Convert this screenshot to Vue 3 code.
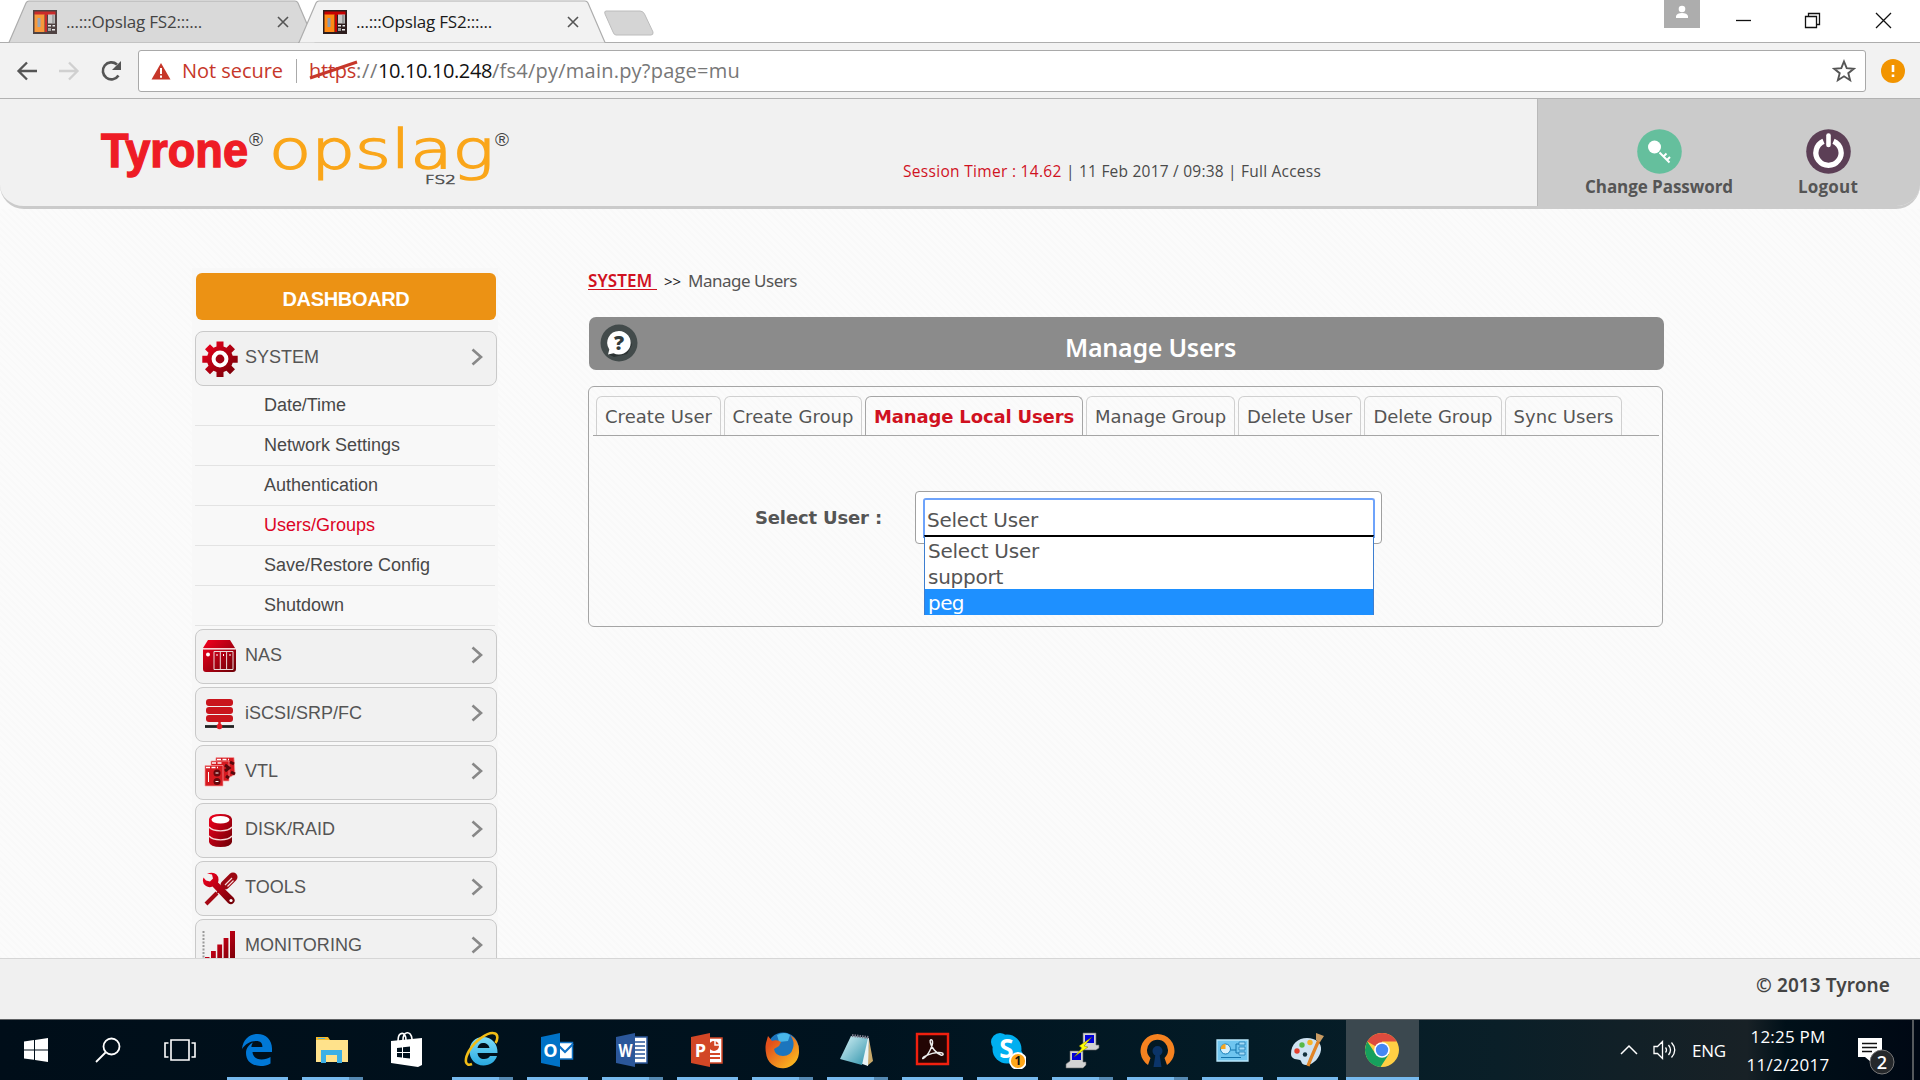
<script setup>
// Stretches a label's letter spacing so that it fills the given width.
const vFit = {
  mounted(el, { value }) {
    const natural = el.getBoundingClientRect().width
    el.style.letterSpacing = (value - natural) / el.textContent.length + 'px'
  },
}

const browserTabs = [
  { title: '...:::Opslag FS2:::...', active: false },
  { title: '...:::Opslag FS2:::...', active: true },
]

const submenu = [
  { label: 'Date/Time', w: 82 },
  { label: 'Network Settings', w: 136 },
  { label: 'Authentication', w: 114 },
  { label: 'Users/Groups', w: 111, active: true },
  { label: 'Save/Restore Config', w: 166 },
  { label: 'Shutdown', w: 80 },
]

const menu = [
  { id: 'system', label: 'SYSTEM', w: 74 },
  { id: 'nas', label: 'NAS', w: 37 },
  { id: 'iscsi', label: 'iSCSI/SRP/FC', w: 117 },
  { id: 'vtl', label: 'VTL', w: 33 },
  { id: 'disk', label: 'DISK/RAID', w: 90 },
  { id: 'tools', label: 'TOOLS', w: 61 },
  { id: 'monitoring', label: 'MONITORING', w: 117 },
]

const tabs = [
  { label: 'Create User', box: 125, w: 107 },
  { label: 'Create Group', box: 138, w: 121 },
  { label: 'Manage Local Users', box: 218, w: 200 },
  { label: 'Manage Group', box: 149, w: 131 },
  { label: 'Delete User', box: 123, w: 105 },
  { label: 'Delete Group', box: 138, w: 119 },
  { label: 'Sync Users', box: 117, w: 100 },
]
tabs[2].active = true

const options = [
  { label: 'Select User', w: 111 },
  { label: 'support', w: 75 },
  { label: 'peg', w: 36, active: true },
]

const apps = [
  { id: 'edge', run: true },
  { id: 'explorer', run: true, multi: true },
  { id: 'store' },
  { id: 'ie', run: true, multi: true },
  { id: 'outlook', run: true },
  { id: 'word', run: true, multi: true },
  { id: 'powerpoint', run: true },
  { id: 'firefox', run: true, multi: true },
  { id: 'notepad', run: true, multi: true },
  { id: 'acrobat', run: true },
  { id: 'skype', run: true },
  { id: 'putty', run: true, multi: true },
  { id: 'openvpn', run: true, multi: true },
  { id: 'panel', run: true },
  { id: 'paint', run: true },
  { id: 'chrome', run: true, active: true },
]
</script>

<template>
  <div class="screen">
    <!-- Shared gradients -->
    <svg class="defs" width="0" height="0">
      <defs>
        <linearGradient id="red" x1="0" y1="0" x2="1" y2="1">
          <stop offset="0.1" stop-color="#e8001c" /><stop offset="1" stop-color="#6b0006" />
        </linearGradient>
        <linearGradient id="sky" x1="0" y1="0" x2="1" y2="1">
          <stop offset="0" stop-color="#d9f4f8" /><stop offset="1" stop-color="#2f93ab" />
        </linearGradient>
        <linearGradient id="ie" x1="0" y1="0" x2="0" y2="1">
          <stop offset="0" stop-color="#7ddcf9" /><stop offset="1" stop-color="#29a9e0" />
        </linearGradient>
        <linearGradient id="fox" x1="0" y1="0" x2="1" y2="1">
          <stop offset="0.2" stop-color="#e2501c" /><stop offset="1" stop-color="#ffcb20" />
        </linearGradient>
      </defs>
    </svg>

    <div class="tabstrip">
      <div v-for="(t, i) in browserTabs" :key="i" class="btab" :class="{ active: t.active }">
        <svg class="btab-shape" width="308" height="43" viewBox="0 0 308 43">
          <path d="M0 42.5 H1 L18 3 Q19 1 21 1 H287 Q289 1 290 3 L307 42.5" />
        </svg>
        <svg class="favicon" width="24" height="24" viewBox="0 0 24 24">
          <path fill="#2d1d1d" d="M0 0h24v24H0z" />
          <path fill="#c60000" d="M1.500 1.500h21V5h-21zM12 1.500h2V22h-2z" />
          <path fill="#ff8a14" d="M1.500 4.500h10V22h-10z" />
          <path fill="#8b9aae" d="M4.500 8h3v9h-3z" />
          <path fill="#c9c9c9" d="M15 4.500h7v9h-7z" />
          <path fill="#999" d="M19 5h2.500v8H19zM15 18h3v3h-3z" />
          <path fill="#eee" d="M15 15h3v1.500h-3zM19.500 15H22v1.500h-2.500zM19 19h3v1.500h-3z" />
        </svg>
        <span v-fit="136" class="btab-title">{{ t.title }}</span>
        <svg class="btab-close" width="12" height="12" viewBox="0 0 12 12"><path d="M1 1l10 10M11 1L1 11" fill="none" stroke="#555" stroke-width="1.600" /></svg>
      </div>
      <svg class="newtab" width="54" height="26" viewBox="0 0 54 26">
        <path d="M3 1H37Q40 1 41.500 4L50 22Q50.500 25 48 25H13Q11 25 10 22L2 4Q1 1 3 1Z" fill="#d5d5d5" stroke="#bcbcbc" />
      </svg>
      <div class="window-controls">
        <svg class="profile" width="36" height="28" viewBox="0 0 36 28"><circle cx="18" cy="9" r="3.300" fill="#fff" /><path d="M12 18v-2q1-3 6-3t6 3v2z" fill="#fff" /></svg>
        <svg class="wc" width="17" height="17" viewBox="0 0 17 17"><path d="M1 8.500h15" /></svg>
        <svg class="wc" width="17" height="17" viewBox="0 0 17 17"><path d="M1.500 4.500h11v11h-11zM4.500 4V1.500h11v11H13" /></svg>
        <svg class="wc close" width="17" height="17" viewBox="0 0 17 17"><path d="M1 1l15 15M16 1L1 16" /></svg>
      </div>
    </div>

    <div class="toolbar">
      <svg class="nav-icons" width="110" height="24" viewBox="0 0 110 24" fill="none" stroke-width="2.300">
        <path d="M21 12H3M11 3.500L2.500 12L11 20.500" stroke="#555" />
        <path d="M43 12h18M53 3.500L61.500 12L53 20.500" stroke="#d0d0d0" />
        <g transform="translate(1 0)"><path d="M101.500 16.500A8.500 8.500 0 1 1 100 5.500" stroke="#555" stroke-width="2.600" />
        <path d="M104 2v9h-9z" fill="#555" /></g>
      </svg>
      <div class="omnibox">
        <svg width="20" height="18" viewBox="0 0 20 18"><path d="M10 1L19.500 17.500H.5Z" fill="#c6372a" /><path d="M10 6v6M10 13.500v2.200" stroke="#fff" stroke-width="2" /></svg>
        <span v-fit="101" class="not-secure">Not secure</span>
        <i class="sep"></i>
        <span class="url"><span v-fit="47" class="scheme">https<svg class="strike" width="50" height="22" viewBox="0 0 50 22"><path d="M1 19L48 3" stroke="#c6372a" stroke-width="3" /></svg></span><span v-fit="22">://</span><span v-fit="114" class="host">10.10.10.248</span><span v-fit="248">/fs4/py/main.py?page=mu</span></span>
        <svg class="star" width="24" height="24" viewBox="0 0 24 24"><path d="M12 2.500l2.700 6.700 7.100.5-5.500 4.500 1.800 7L12 17.300 5.900 21.200l1.800-7L2.200 9.700l7.100-.5z" fill="none" stroke="#555" stroke-width="1.900" /></svg>
      </div>
      <svg class="alert" width="24" height="24" viewBox="0 0 24 24"><circle cx="12" cy="12" r="12" fill="#f29400" /><path d="M12 6v7M12 15.500v2.500" stroke="#fff" stroke-width="2.600" /></svg>
    </div>

    <header class="header">
      <svg class="logo" width="420" height="76" viewBox="0 0 420 76">
        <text x="1" y="47.500" font-size="49" font-weight="700" fill="#ee1c25" stroke="#ee1c25" stroke-width="1.400" textLength="147" lengthAdjust="spacingAndGlyphs">Tyrone</text>
        <text x="149" y="27" font-size="19" fill="#444" textLength="14" lengthAdjust="spacingAndGlyphs">®</text>
        <text class="thin" x="169" y="49" font-size="53" fill="#faa61a" stroke="#faa61a" stroke-width="1.500" textLength="225" lengthAdjust="spacingAndGlyphs">opslag</text>
        <text class="thin" x="325" y="64.500" font-size="13" fill="#555" stroke="#555" stroke-width=".7" textLength="31" lengthAdjust="spacingAndGlyphs">FS2</text>
        <text x="395" y="27" font-size="19" fill="#444" textLength="14" lengthAdjust="spacingAndGlyphs">®</text>
      </svg>
      <div class="session"><span v-fit="163" class="red">Session Timer : 14.62 </span><span v-fit="255">| 11 Feb 2017 / 09:38 | Full Access</span></div>
      <div class="account">
        <div class="action pass">
          <svg width="45" height="45" viewBox="0 0 45 45"><circle cx="22.500" cy="22.500" r="22.300" fill="#65bf9d" /><circle cx="17.500" cy="18" r="6.500" fill="#fff" /><path d="M22.500 23.500L32.500 33.500M26.500 27.500l3-3M30 31l3-3" stroke="#fff" stroke-width="2" fill="none" /></svg>
          <span v-fit="148">Change Password</span>
        </div>
        <div class="action">
          <svg width="45" height="45" viewBox="0 0 45 45"><circle cx="22.500" cy="22.500" r="22.300" fill="#5c3f56" /><path d="M17.500 12.200A12.600 12.600 0 1 0 27.500 12.200" stroke="#fff" stroke-width="5.300" fill="none" /><path d="M22.500 6.500v9.500" stroke="#fff" stroke-width="4.600" stroke-linecap="round" /></svg>
          <span v-fit="60">Logout</span>
        </div>
      </div>
    </header>

    <main class="main">
      <nav class="sidebar">
        <div class="dashboard"><span v-fit="127">DASHBOARD</span></div>
        <template v-for="m in menu" :key="m.id">
          <div class="item">
            <svg class="item-icon" width="36" height="36" viewBox="0 0 36 36">
              <g v-if="m.id === 'system'">
                <path fill="url(#red)" d="M14.500.5h7v5l3 1.200 3.500-3.500 5 5-3.500 3.500 1.200 3h5v7h-5l-1.200 3 3.500 3.500-5 5-3.500-3.500-3 1.200v5h-7v-5l-3-1.200L8 33.200l-5-5 3.500-3.500-1.200-3h-5v-7h5l1.200-3L3 8.200l5-5 3.500 3.500 3-1.200z" />
                <circle cx="18" cy="18" r="6.400" fill="#a00012" stroke="#fff" stroke-width="4" />
              </g>
              <g v-else-if="m.id === 'nas'">
                <path fill="url(#red)" d="M6 1h22l5 8H1zM1 10.500h33V30q0 3-3 3H4q-3 0-3-3z" />
                <path d="M1.500 9.700h32" stroke="#f8cccc" />
                <circle cx="6" cy="15.500" r="2" fill="#fff" />
                <path d="M12 12.500h19v18H12zM18.300 12.500v18M24.600 12.500v18" fill="none" stroke="#eadada" />
                <path d="M15 15v2M21.500 15v2M28 15v2" stroke="#fff" />
              </g>
              <g v-else-if="m.id === 'iscsi'">
                <rect x="4" y="2" width="27" height="7" rx="3" fill="#c9141c" />
                <rect x="4" y="10" width="27" height="7" rx="3" fill="#c9141c" />
                <rect x="4" y="18" width="27" height="7" rx="3" fill="#c9141c" />
                <path d="M17.500 25v6" stroke="#e01a22" stroke-width="2.500" /><path d="M3 29.500h29" stroke="#222" stroke-width="2.800" /><circle cx="17.500" cy="29.500" r="2.800" fill="#e01a22" />
              </g>
              <g v-else-if="m.id === 'vtl'">
                <g fill="#d61a20" stroke="#f5a0a0" stroke-width=".7"><path d="M14 2.500h18l1 17-8 4H13z" /><path d="M9 6h18v20H9z" /><path d="M3 10.500h18V31H3z" /></g>
                <path d="M23 10l4 3-4 3M28 7l4 2M24 21l3 2M29 17l4 2" stroke="#56080c" stroke-width="3" fill="none" />
                <path d="M4 12.500h12M10 8h10M15 4.500h12" stroke="#fff" stroke-width="1.300" stroke-dasharray="4 1.500" />
                <circle cx="15" cy="18" r="3.500" fill="#67080d" /><circle cx="15" cy="26.500" r="3.500" fill="#67080d" /><path d="M6.500 17v10M13.500 18h3M13.500 26.500h3" stroke="#fff" />
              </g>
              <g v-else-if="m.id === 'disk'">
                <path fill="url(#red)" d="M7 6v23q1 5 11.500 5T30 29V6Q29 1 18.500 1T7 6z" />
                <ellipse cx="18.500" cy="6.800" rx="9" ry="3.800" fill="#fff" />
                <path d="M7 14q3 3.800 11.500 3.800T30 14M7 23q3 3.800 11.500 3.800T30 23" fill="none" stroke="#f7dada" stroke-width="1.300" />
              </g>
              <g v-else-if="m.id === 'tools'">
                <path d="M4 33l11-11" stroke="#a50814" stroke-width="4" /><path d="M15 22l7-7" stroke="#a50814" stroke-width="2" />
                <path d="M23 14l8-8" stroke="#9c0712" stroke-width="9" stroke-linecap="round" />
                <path d="M23 14l7-7M25.500 15.500l6-6" stroke="#f5dada" stroke-width="1.200" />
                <path fill="url(#red)" d="M5 2.500l5 1 1 4-3 3-4-1-2.500-3Q-.5 12 4 15q3 2 6.500.5L26 32q3 2.500 5.500 0t0-5.500L16 11.500q1.500-5-1.500-8T5 2.500z" />
                <circle cx="29" cy="29.500" r="1.600" fill="#fff" />
              </g>
              <g v-else>
                <path d="M1.500 2v34" stroke="#999" stroke-width="2" stroke-dasharray="2 1.500" />
                <path fill="url(#red)" d="M3 28h4.500v10H3zM9 22h4.800v16H9zM15.300 15.500h4.800V38h-4.800zM21.600 9h4.800v29h-4.800zM28 2h5v36h-5z" />
              </g>
            </svg>
            <span v-fit="m.w" class="item-label">{{ m.label }}</span>
            <svg class="chev" width="12" height="18" viewBox="0 0 12 18"><path d="M1.500 1.500L10 9L1.500 16.500" fill="none" stroke="#888" stroke-width="2.600" /></svg>
          </div>
          <ul v-if="m.id === 'system'" class="submenu">
            <li v-for="s in submenu" :key="s.label" :class="{ active: s.active }"><span v-fit="s.w">{{ s.label }}</span></li>
          </ul>
        </template>
      </nav>

      <section class="content">
        <div class="crumbs"><a v-fit="69">SYSTEM&nbsp;</a><span v-fit="17" class="arrows">&gt;&gt;</span><span v-fit="109">Manage Users</span></div>
        <div class="titlebar">
          <svg class="help" width="38" height="38" viewBox="0 0 38 38"><circle cx="19" cy="19" r="18.500" fill="#434b4b" /><path d="M8 30l6 3 13-3 5-9-3-9z" fill="#2c3333" /><path d="M19 7a11.800 11.800 0 1 1-5.500 22.300L8 30.500l1.300-5A11.800 11.800 0 0 1 19 7z" fill="#fff" /><text x="19" y="26" text-anchor="middle" font-size="20" font-weight="800" fill="#333c3c">?</text></svg>
          <h1><span v-fit="171">Manage Users</span></h1>
        </div>
        <div class="panel">
          <div class="tabs">
            <div v-for="t in tabs" :key="t.label" class="tab" :class="{ active: t.active }" :style="{ width: t.box + 'px' }"><span v-fit="t.w">{{ t.label }}</span></div>
          </div>
          <div class="form-row">
            <label><span v-fit="127">Select User :</span></label>
            <div class="select">
              <div class="select-inner"><span v-fit="111">Select User</span></div>
              <ul class="dropdown">
                <li v-for="o in options" :key="o.label" :class="{ active: o.active }"><span v-fit="o.w">{{ o.label }}</span></li>
              </ul>
            </div>
          </div>
        </div>
      </section>
    </main>

    <footer class="footer"><span v-fit="134">© 2013 Tyrone</span></footer>

    <div class="taskbar">
      <div class="starts">
        <svg width="24" height="24" viewBox="0 0 24 24"><path fill="#fff" d="M0 3.500l10-1.400v9.300H0zM11 2l13-2v11.400H11zM0 12.500h10v9.300L0 20.500zM11 12.500h13V24l-13-2z" /></svg>
        <svg width="26" height="26" viewBox="0 0 26 26" fill="none" stroke="#fff" stroke-width="1.800"><circle cx="16.500" cy="9.500" r="8" /><path d="M10.500 15.500L1 25" /></svg>
        <svg width="32" height="24" viewBox="0 0 32 24" fill="none" stroke="#fff" stroke-width="1.600"><path d="M7 2h18v20H7zM4.500 5H1v14h3.500M27.500 5H31v14h-3.500" /></svg>
      </div>
      <div class="apps">
        <div v-for="a in apps" :key="a.id" class="app" :class="{ run: a.run, multi: a.multi, active: a.active }">
          <svg width="38" height="38" viewBox="0 0 38 38">
            <g v-if="a.id === 'edge'">
              <path fill="#0078d7" d="M4 18C5 8 12 3 19.500 3 28 3 34 9 34 17.500V21H14.500c.3 5 4.500 7.500 9 7.500 3.500 0 6.500-1 9-2.500v6.500C29.500 34.500 26 35 22.500 35 14 35 8 30 8 22c0-5 3-8.500 7-10.500-1 1.200-1.500 3-1.600 4.500h11c0-4-2-6-6-6-6 0-11 3-14.400 8z" />
            </g>
            <g v-else-if="a.id === 'explorer'">
              <path fill="#f4b92c" d="M3 6h12l2 3h18v4H3z" /><path fill="#ffe28b" d="M3 9h32v22H3z" /><path fill="#3cb0e6" d="M8 19h21v13h-5v-8H13v8H8z" /><path d="M5 7.500h7" stroke="#55b4dd" />
            </g>
            <g v-else-if="a.id === 'store'">
              <path fill="#fff" d="M3 10l31-3v27l-4 2L3 32z" /><path d="M10 10C10 0 18 0 18 9M15 9C15 0 23-1 24 8" fill="none" stroke="#fff" stroke-width="1.600" /><path fill="#00101c" d="M9 17l5-.6V21H9zM15 16.200l7-.8V21h-7zM9 22h5v4.500L9 26zM15 22h7v5.500l-7-.8z" />
            </g>
            <g v-else-if="a.id === 'ie'">
              <path fill="url(#ie)" d="M20 6C29 6 35 13 34.500 22H14.500c.5 4 3 6 6.500 6 3 0 5-1 6-3h7c-2 6-7 9.500-13.500 9.500C12 34.500 6.500 28 6.500 20S12 6 20 6zm0 6c-3 0-5 2-5.500 5h12c-.5-3-3-5-6.500-5z" />
              <path d="M9 33C2 36 1 29 6 20 12 10 25 0 32 2.500 35.500 4 34.500 9 32.500 12" fill="none" stroke="#f2bd16" stroke-width="2.600" />
            </g>
            <g v-else-if="a.id === 'outlook'">
              <path fill="#fff" d="M20 11h15v17H20z" /><path d="M20 11.500h14.500v16.500H20" fill="none" stroke="#1273c4" stroke-width="1.500" /><path d="M20 14l7 7 8-8" fill="none" stroke="#0f72c6" stroke-width="2.200" /><path fill="#0072c6" d="M3 6l19-4v34L3 32z" /><text x="12.500" y="25.500" class="ico-letter">O</text>
            </g>
            <g v-else-if="a.id === 'word'">
              <path fill="#fff" stroke="#2b579a" stroke-width="1.500" d="M20 6h14v26H20z" /><path d="M22 11h10M22 15h10M22 19h10M22 23h10M22 27h10" stroke="#2b579a" stroke-width="1.700" /><path fill="#2b579a" d="M3 6l19-4v34L3 32z" /><text x="12.500" y="25.500" class="ico-letter" textLength="14" lengthAdjust="spacingAndGlyphs">W</text>
            </g>
            <g v-else-if="a.id === 'powerpoint'">
              <path fill="#fff" stroke="#d24726" stroke-width="1.500" d="M20 7h14v25H20z" /><circle cx="26" cy="15" r="5" fill="#d24726" /><path d="M27 9v5h5" stroke="#fff" stroke-width="1.500" fill="none" /><path d="M22 23h10M22 27h10" stroke="#d24726" stroke-width="1.800" /><path fill="#d24726" d="M3 6l19-4v34L3 32z" /><text x="12.500" y="25.500" class="ico-letter">P</text>
            </g>
            <g v-else-if="a.id === 'firefox'">
              <circle cx="20" cy="17" r="15.500" fill="#1c75bd" /><path fill="#49b6e8" d="M14 4q8-4 13 0l-2 6-9 1z" />
              <path fill="url(#fox)" d="M3 12L5 5l4 5q5-2 9 1l-2 4-5 3q1 7 9 7 8 0 10-8 2-7-3-13 9 5 9 15.500A16.300 16.300 0 0 1 3 22q-1-5 0-10z" />
            </g>
            <g v-else-if="a.id === 'notepad'">
              <path fill="#c8a96b" d="M31 8l4 22-6 5z" /><path fill="#e9f4f5" d="M14 5l17 2-1 28-14-5z" /><path fill="url(#sky)" d="M13 5l17 2-6 27L2 28z" /><path d="M14 4.500l17 2" stroke="#778" stroke-width="3" stroke-dasharray="1.500 1" />
            </g>
            <g v-else-if="a.id === 'acrobat'">
              <path fill="#230504" stroke="#f0200f" stroke-width="2.400" d="M4 3h31v30H4z" /><path d="M10 27.500c5-2 10-13 9.500-17-.5-3-3-2-2.200 1 1 5 6 11 10.500 12.500 3 .8 3-1.800.5-2.300-5-1-13 1.500-17 4-1.500 1-2 2.300-1.300 1.800z" fill="none" stroke="#eee" stroke-width="1.500" />
            </g>
            <g v-else-if="a.id === 'skype'">
              <circle cx="12" cy="11" r="9" fill="#00aff0" /><circle cx="26" cy="25" r="9" fill="#00aff0" /><circle cx="19" cy="18" r="14.500" fill="#00aff0" /><text x="18.500" y="27" class="ico-letter big">S</text>
              <circle cx="30" cy="30" r="8" fill="#ffa719" stroke="#fff" stroke-width="1.800" /><text x="30" y="34" class="badge-one">1</text>
            </g>
            <g v-else-if="a.id === 'putty'">
              <path fill="#d3d3d3" stroke="#666" stroke-width=".6" d="M20 2h13v12h3v3l-3 2H18v-4h2zM7 20h13v11h3v3l-3 3H3v-4l4-3z" /><path fill="#0000d8" d="M22 4h9v8h-9zM9 22h9v7H9z" /><path fill="#ff0" stroke="#550" stroke-width=".4" d="M29 6l-13 9 3 2-8 9 14-10-4-1z" />
            </g>
            <g v-else-if="a.id === 'openvpn'">
              <path fill="#f58220" d="M10 34A17 17 0 1 1 29 34L26.500 27A10.500 10.500 0 1 0 12.500 27z" /><circle cx="19.500" cy="20" r="5" fill="#0b3468" /><path fill="#0b3468" d="M17.500 23h4l2 13h-8z" />
            </g>
            <g v-else-if="a.id === 'panel'">
              <path fill="#6fc5ef" stroke="#b9e7fb" stroke-width="1.300" d="M4 9h31v21H4z" /><circle cx="12.500" cy="18" r="5" fill="#d4effd" stroke="#167eb8" /><path fill="#f5a623" d="M12.500 18v-5a5 5 0 0 0-5 5z" /><path d="M18 19h5v-6h3M23 19v3h3M8 26.500h20" stroke="#1574ac" fill="none" /><path fill="#a5dcf8" stroke="#1674b0" stroke-width=".7" d="M26 11h6v3h-6zM26 16h6v3h-6zM26 21h6v3h-6z" />
            </g>
            <g v-else-if="a.id === 'paint'">
              <path fill="#cfe3f2" d="M19 7c9 0 15 5 14 12s-7 15-15 15c-5 0-4-4-6-5s-9 0-9-6C3 13 10 7 19 7z" /><circle cx="9" cy="20" r="2.700" fill="#e4402f" /><circle cx="14" cy="14" r="2.700" fill="#58b947" /><circle cx="22" cy="11.500" r="2.700" fill="#f7b329" /><circle cx="17" cy="23.500" r="2.200" fill="#14323e" /><path d="M20 35Q22 29 31 9" stroke="#e08426" stroke-width="3.200" fill="none" /><path d="M28 2l8 3-4 6-4-2z" fill="#c99b62" />
            </g>
            <g v-else>
              <circle cx="19" cy="19" r="17" fill="#ffcf44" /><path fill="#dd4b3e" d="M19 19L4.300 10.500A17 17 0 0 1 33.700 10.500H19z" /><path fill="#16a05d" d="M4.300 10.500A17 17 0 0 0 17.500 36L26 23l-14-1z" /><circle cx="19" cy="19" r="7.800" fill="#fff" /><circle cx="19" cy="19" r="6.200" fill="#4587f3" />
            </g>
          </svg>
        </div>
      </div>
      <div class="tray">
        <svg width="18" height="11" viewBox="0 0 18 11"><path d="M1 10L9 2l8 8" fill="none" stroke="#fff" stroke-width="1.500" /></svg>
        <svg class="speaker" width="24" height="20" viewBox="0 0 24 20" fill="none" stroke="#fff" stroke-width="1.300"><path d="M1 6.500h3.500L9.500 1.500v17L4.500 13.500H1zM12.500 7.500q2 2.500 0 5M15.500 5q4 5 0 10M18.500 2.500q6.500 7.500 0 15" /></svg>
        <span v-fit="34" class="lang">ENG</span>
        <div class="clock"><span v-fit="75">12:25 PM</span><span v-fit="83">11/2/2017</span></div>
        <svg class="notify" width="38" height="38" viewBox="0 0 38 38"><path fill="#fff" d="M1 1h24v19H14v5l-6-5H1z" /><path d="M5 6.500h15M5 10.500h15M5 14.500h10" stroke="#111" stroke-width="1.300" /><circle cx="25" cy="25" r="12" fill="#25282b" stroke="#777" /><text x="25" y="31.500" text-anchor="middle" font-size="18" font-weight="600" fill="#fff">2</text></svg>
        <i class="peek"></i>
      </div>
    </div>
  </div>
</template>

<style>
body { margin: 0; overflow: hidden; }
</style>

<style scoped>
.screen { width: 1920px; height: 1080px; display: flex; flex-direction: column; overflow: hidden; background: #fbfbfb; font-family: "Open Sans", "Noto Sans", sans-serif; color: #555; }
.screen * { box-sizing: border-box; }
.screen svg { flex: none; display: block; }
.screen span { display: inline-block; white-space: pre; flex: none; }
.defs { position: absolute; }
ul { list-style: none; margin: 0; padding: 0; }

.tabstrip { height: 43px; flex: none; display: flex; background: #fff; border-bottom: 1px solid #adadad; padding-left: 8px; }
.btab { position: relative; width: 308px; height: 43px; flex: none; display: flex; margin-right: -18px; padding-left: 25px; }
.btab + .btab { margin-right: -12px; padding-left: 25px; }
.btab-shape { position: absolute; left: 0; top: 0; fill: #d9d9d9; stroke: #adadad; stroke-width: 1.2; }
.btab.active .btab-shape { fill: #f2f2f2; }
.favicon { position: relative; margin-top: 10px; }
.btab:not(.active) .favicon { opacity: .8; }
.btab-title { position: relative; margin-left: 9px; font-size: 17px; line-height: 44px; color: #444; }
.btab.active .btab-title { color: #1a1a1a; }
.btab-close { position: relative; margin: 16px 0 0 75px; }
.newtab { margin: 10px 0 0 9px; }
.window-controls { margin-left: auto; display: flex; padding-right: 28px; }
.profile { background: #adadad; margin-right: 34px; }
.wc { margin: 12px 0 0 52px; fill: none; stroke: #111; stroke-width: 1.3; }
.wc.close { margin-left: 54px; }
.profile + .wc { margin-left: 1px; }

.toolbar { height: 56px; flex: none; display: flex; align-items: center; background: #f2f2f2; border-bottom: 1px solid #b2b2b2; padding: 0 15px 0 16px; }
.nav-icons { margin-right: 12px; }
.omnibox { width: 1728px; height: 42px; flex: none; display: flex; align-items: center; background: #fff; border: 1px solid #a9a9a9; border-radius: 3px; font-size: 20px; line-height: 40px; padding-left: 12px; color: #777; }
.not-secure { margin-left: 11px; color: #c6372a; }
.sep { width: 1px; height: 24px; background: #aaa; margin: 0 12px 0 13px; }
.url { display: flex !important; }
.scheme { position: relative; color: #c6372a; }
.strike { position: absolute; left: 0; top: 8px; }
.host { color: #111; }
.star { margin-left: auto; margin-right: 9px; }
.alert { margin-left: 15px; }

.header { height: 110px; flex: none; display: flex; background: #f1f1f1; border-bottom: 3px solid #cbcbcb; border-radius: 0 0 24px 24px; overflow: hidden; }
.logo { margin: 20px 0 0 100px; font-family: "Liberation Sans", sans-serif; }
.thin { font-family: "DejaVu Sans Light", "DejaVu Sans", sans-serif; font-weight: 200; }
.session { margin: 60px 0 0 383px; height: 24px; display: flex; font-size: 15.5px; line-height: 24px; color: #4a4a4a; }
.session .red { color: #d0111f; }
.account { margin-left: auto; width: 383px; height: 110px; background: #cbcbcb; border-left: 1px solid #b9b9b9; display: flex; padding: 30px 0 0 47px; }
.action { display: flex; flex-direction: column; align-items: center; font-size: 17px; font-weight: 700; line-height: 26px; color: #555; }
.action.pass { margin-right: 65px; }

.main { height: 749px; flex: none; overflow: hidden; display: flex; align-items: flex-start; background: repeating-linear-gradient(45deg, rgba(0,0,0,.008) 0 2px, transparent 2px 5px), #fbfbfb; }
.sidebar { margin: 59px 0 0 192px; width: 306px; flex: none; background: #f8f8f8; padding: 5px 1px 0 3px; font-family: "Liberation Sans", Arial, sans-serif; font-size: 18px; }
.dashboard { height: 47px; margin: 0 1px 11px; border-radius: 6px; background: #ec9214; color: #fff; font-size: 20px; font-weight: 700; line-height: 52px; text-align: center; }
.item { height: 55px; margin-bottom: 3px; display: flex; border: 1px solid #c9c9c9; border-radius: 8px; background: #f1f1f1; padding-left: 6px; line-height: 50px; }
.item:has(+ .submenu) { margin-bottom: 0; }
.item-icon { margin-top: 9px; }
.item-label { margin-left: 7px; color: #555; }
.chev { margin: 16px 13px 0 auto; }
.submenu { margin: 0 2px 3px 0; color: #484848; }
.submenu li { height: 40px; border-bottom: 1px solid #e3e3e3; padding-left: 69px; line-height: 38px; }
.submenu .active { color: #dc0425; }

.content { margin: 59px 0 0 89px; width: 1077px; flex: none; }
.crumbs { height: 24px; line-height: 26px; font-size: 17px; display: flex; padding-left: 1px; font-family: "Noto Sans", sans-serif; }
.crumbs a { color: #d0111f; font-weight: 600; text-decoration: underline; text-underline-offset: 2px; white-space: nowrap; }
.arrows { margin: 0 7px 0 7px; color: #222; font-size: 15px; }
.titlebar { position: relative; margin: 25px 0 0 2px; height: 53px; border-radius: 7px; background: #8b8b8b; }
.help { position: absolute; left: 11px; top: 7px; }
.titlebar h1 { margin: 0 0 0 48px; font: 600 25px/61px "Noto Sans", sans-serif; color: #fff; text-align: center; }
.panel { margin: 16px 1px 0 1px; height: 241px; border: 1px solid #a5a5a5; border-radius: 6px; padding: 9px 3px 0 4px; font-family: "DejaVu Sans", Verdana, sans-serif; font-size: 18px; }
.tabs { height: 40px; display: flex; gap: 3px; padding-left: 3px; border-bottom: 1px solid #a5a5a5; }
.tab { height: 39px; flex: none; border: 1px solid #d0d0d0; border-bottom: 0; border-radius: 6px 6px 0 0; line-height: 39px; text-align: center; }
.tab.active { border-color: #a5a5a5; color: #d0111f; font-weight: 700; }
.form-row { display: flex; margin-top: 55px; padding-left: 162px; }
.form-row label { width: 160px; font-weight: 700; line-height: 53px; }
.select { position: relative; width: 467px; height: 53px; border: 1px solid #a0a0a0; border-radius: 4px; background: #fff; padding: 6px 7px; font-size: 20px; }
.select-inner { height: 40px; width: 452px; border: 2px solid #6ea3fb; border-bottom: 0; border-radius: 3px 3px 0 0; line-height: 41px; padding-left: 2px; }
.dropdown { position: absolute; left: 8px; top: 43px; width: 450px; height: 80px; background: #fff; border: 1px solid #3d7ed0; border-top: 2px solid #000; border-bottom: 0; }
.dropdown li { height: 26px; line-height: 28px; padding-left: 3px; }
.dropdown .active { background: #1e90ff; color: #fff; }

.footer { height: 61px; flex: none; background: #f0f0f0; border-top: 1px solid #d6d6d6; display: flex; justify-content: flex-end; padding-right: 30px; font: 600 19px/52px "Noto Sans", sans-serif; color: #444; }

.taskbar { height: 61px; flex: none; display: flex; border-top: 1px solid #5f6164; background: linear-gradient(90deg, #000e19, #00131f 45%, #031b26 65%, #0a1f28 78%, #182126 91%, #001019 93%, #000814); }
.starts { width: 227px; flex: none; display: flex; align-items: center; padding: 0 0 1px 24px; gap: 47px; }
.starts svg + svg + svg { margin-left: -4px; }
.apps { display: flex; gap: 14px; }
.app { position: relative; width: 61px; height: 60px; flex: none; display: flex; justify-content: center; padding: 11px 2px 0 0; }
.app.run { border-bottom: 3px solid #76b9ed; }
.app.multi::after { content: ""; position: absolute; right: 0; bottom: -3px; width: 14px; height: 3px; background: #5589b2; }
.app.active { width: 73px; margin-left: -7px; background: #3b484f; left: 1px; }
.ico-letter { font: 700 18px "Open Sans", sans-serif; fill: #fff; text-anchor: middle; }
.ico-letter.big { font-size: 26px; }
.badge-one { font: 700 12px "Open Sans", sans-serif; fill: #111; text-anchor: middle; }
.tray { margin-left: auto; display: flex; align-items: flex-start; color: #fff; font-size: 17px; line-height: 24px; }
.tray > svg:first-child { margin-top: 24px; }
.speaker { margin: 20px 0 0 15px; }
.lang { margin: 19px 0 0 15px; }
.clock { width: 100px; margin: 5px 19px 0 12px; display: flex; flex-direction: column; align-items: center; gap: 4px; }
.notify { margin-top: 17px; }
.peek { width: 2px; height: 60px; margin: 0 6px 0 17px; background: #55595d; }
</style>
